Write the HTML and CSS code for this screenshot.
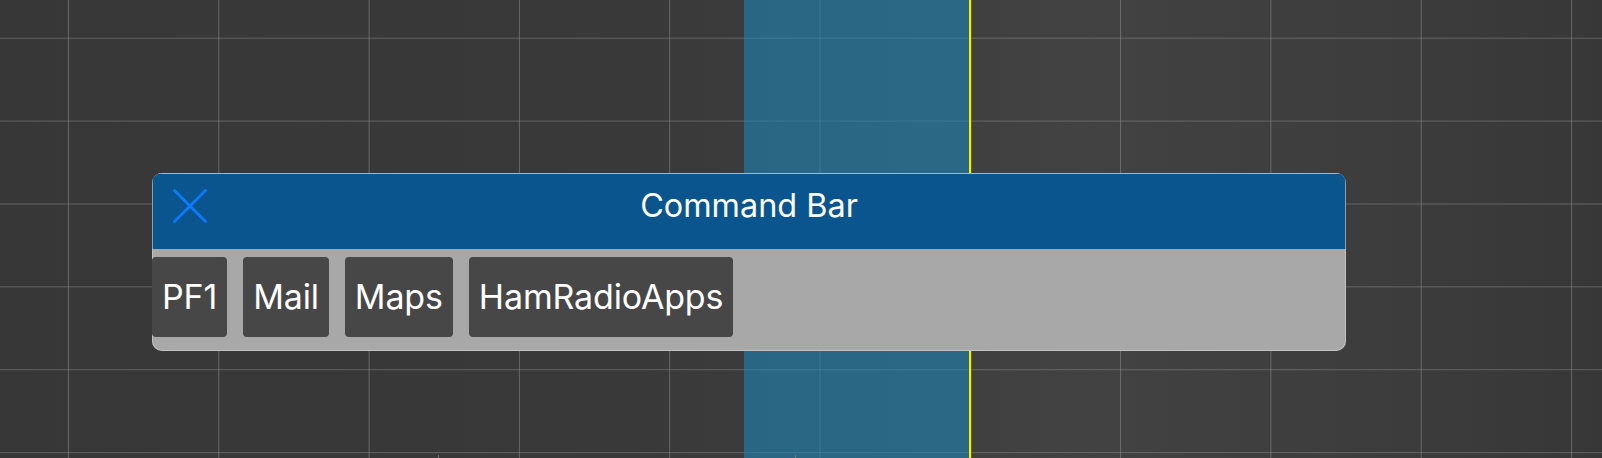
FILE: index.html
```html
<!DOCTYPE html>
<html lang="en">
<head>
<meta charset="utf-8">
<title>Command Bar</title>
<link rel="stylesheet" href="styles.css">
</head>
<body>
<div class="canvas">
  <div class="band"></div>
  <div class="marker"></div>
  <div class="tick tick-a"></div>
  <div class="tick tick-b"></div>

  <section class="panel">
    <header class="panel-head">
      <button class="close" aria-label="Close">
        <svg viewBox="0 0 34 34" width="34" height="34" aria-hidden="true">
          <path d="M1.5 1.5 L32.5 32.5 M32.5 1.5 L1.5 32.5" stroke="#0a7cff" stroke-width="2.6" stroke-linecap="round" fill="none"/>
        </svg>
      </button>
      <h1 class="title">Command Bar</h1>
      <span class="spacer"></span>
    </header>
    <div class="panel-body">
      <button class="cmd">PF1</button>
      <button class="cmd">Mail</button>
      <button class="cmd">Maps</button>
      <button class="cmd">HamRadioApps</button>
    </div>
  </section>
</div>
</body>
</html>
```

FILE: styles.css
```css
html, body {
  margin: 0;
  padding: 0;
  background: #383838;
}

.canvas {
  position: relative;
  width: 1602px;
  height: 458px;
  overflow: hidden;
  font-family: Inter, "Liberation Sans", Arial, sans-serif;
  background-color: #3a3a3a;
  background-image:
    linear-gradient(to right, rgba(150,150,150,0.5) 1px, transparent 1px),
    linear-gradient(to bottom, rgba(150,150,150,0.45) 1px, transparent 1px),
    linear-gradient(90deg, #373737 0%, #393939 40%, #404040 60%, #424242 68%, #3d3d3d 85%, #373737 100%);
  background-size: 150.3px 100%, 100% 82.9px, 100% 100%;
  background-position: 68px 0, 0 37.7px, 0 0;
}

.band {
  position: absolute;
  left: 744px;
  top: 0;
  width: 225px;
  height: 458px;
  background: rgba(30, 132, 180, 0.6);
}

.marker {
  position: absolute;
  left: 969px;
  top: 0;
  width: 2px;
  height: 458px;
  background: #f4f200;
  box-shadow: 1px 0 0 rgba(120,120,0,0.6);
}

.tick {
  position: absolute;
  bottom: 0;
  width: 1px;
  height: 3px;
  background: #777;
}
.tick-a { left: 438px; }
.tick-b { left: 795px; }

.panel {
  position: absolute;
  left: 152px;
  top: 173px;
  width: 1194px;
  border-radius: 10px;
  overflow: hidden;
  background: #a8a8a8;
  box-shadow: inset 0 0 0 1px rgba(210,210,210,0.6);
}

.panel-head {
  display: grid;
  grid-template-columns: 1fr auto 1fr;
  align-items: center;
  height: 76px;
  box-sizing: border-box;
  padding: 15px 20px 27px;
  background: #0b558f;
  border-top: 1px solid #b4b4b4;
  border-left: 1px solid #8a9fb0;
  border-right: 1px solid #8a9fb0;
}

.close {
  justify-self: start;
  width: 34px;
  height: 34px;
  margin: 0;
  padding: 0;
  border: 0;
  background: none;
  display: block;
}
.close svg { display: block; }

.title {
  margin: 0;
  font-size: 32.4px;
  font-weight: 400;
  line-height: 34px;
  color: #ffffff;
  letter-spacing: 0;
}

.panel-body {
  display: flex;
  gap: 16px;
  padding: 8px 0 14px;
}

.cmd {
  height: 80px;
  margin: 0;
  padding: 0 10px;
  border: 0;
  border-radius: 4px;
  background: #474747;
  color: #ffffff;
  font-family: Inter, "Liberation Sans", Arial, sans-serif;
  font-size: 34px;
  font-weight: 400;
  line-height: 40px;
  letter-spacing: -0.15px;
}
```
